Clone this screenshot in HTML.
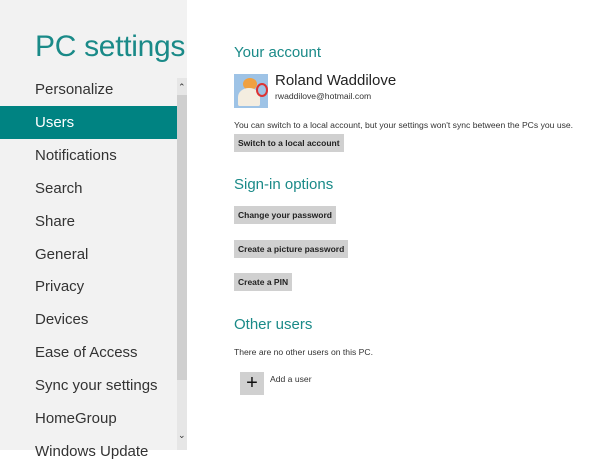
<!DOCTYPE html>
<html><head><style>
body{margin:0;width:600px;height:450px;overflow:hidden;background:#fff;font-family:"Liberation Sans",sans-serif;position:relative}
#side{position:absolute;left:0;top:0;width:187px;height:450px;background:#f2f2f2}
h1{position:absolute;left:35px;top:30px;margin:0;font-weight:normal;font-size:30px;color:#1a8a88;letter-spacing:-0.3px}
.nav{position:absolute;left:0;width:177px;height:33px;line-height:33px;padding-left:35px;box-sizing:border-box;font-size:15px;color:#333}
.sel{background:#008382;color:#fff}
#track{position:absolute;left:177px;top:78px;width:10px;height:372px;background:#e6e6e6}
#thumb{position:absolute;left:177px;top:95px;width:10px;height:285px;background:#cfcfcf}
.ar{position:absolute;left:178px;font-size:9px;color:#333}
h2{position:absolute;left:234px;margin:0;font-weight:normal;font-size:15px;color:#1a8a88}
.t{position:absolute;left:234px;font-size:8.6px;color:#333;white-space:nowrap}
.btn{position:absolute;left:234px;height:18px;line-height:18px;padding:0 4px;background:#d0d0d0;font-size:8.5px;font-weight:bold;color:#222}
</style></head><body>
<div id="side"></div>
<h1>PC settings</h1>
<div class="nav" style="top:73px">Personalize</div>
<div class="nav sel" style="top:106px">Users</div>
<div class="nav" style="top:139px">Notifications</div>
<div class="nav" style="top:172px">Search</div>
<div class="nav" style="top:205px">Share</div>
<div class="nav" style="top:238px">General</div>
<div class="nav" style="top:270px">Privacy</div>
<div class="nav" style="top:303px">Devices</div>
<div class="nav" style="top:336px">Ease of Access</div>
<div class="nav" style="top:369px">Sync your settings</div>
<div class="nav" style="top:402px">HomeGroup</div>
<div class="nav" style="top:435px">Windows Update</div>
<div id="track"></div><div id="thumb"></div>
<div class="ar" style="top:82px">&#8963;</div>
<div class="ar" style="top:430px">&#8964;</div>
<h2 style="top:44px">Your account</h2>
<div style="position:absolute;left:234px;top:74px;width:34px;height:34px;background:#9ec3e6;overflow:hidden">
<div style="position:absolute;left:9px;top:4px;width:14px;height:12px;border-radius:50%;background:#f0a040"></div>
<div style="position:absolute;left:4px;top:14px;width:22px;height:18px;border-radius:50% 50% 10% 10%;background:#f4ede0"></div>
<div style="position:absolute;left:22px;top:9px;width:8px;height:10px;border-radius:50%;border:2px solid #d33"></div></div>
<div style="position:absolute;left:275px;top:72px;font-size:15px;color:#222">Roland Waddilove</div>
<div class="t" style="left:275px;top:91px">rwaddilove@hotmail.com</div>
<div class="t" style="top:120px">You can switch to a local account, but your settings won't sync between the PCs you use.</div>
<div class="btn" style="top:134px">Switch to a local account</div>
<h2 style="top:176px">Sign-in options</h2>
<div class="btn" style="top:206px">Change your password</div>
<div class="btn" style="top:240px">Create a picture password</div>
<div class="btn" style="top:273px">Create a PIN</div>
<h2 style="top:316px">Other users</h2>
<div class="t" style="top:347px">There are no other users on this PC.</div>
<div style="position:absolute;left:240px;top:372px;width:24px;height:23px;background:#d0d0d0;text-align:center;line-height:23px;font-size:20px;color:#111">+</div>
<div class="t" style="left:270px;top:374px">Add a user</div>
</body></html>
